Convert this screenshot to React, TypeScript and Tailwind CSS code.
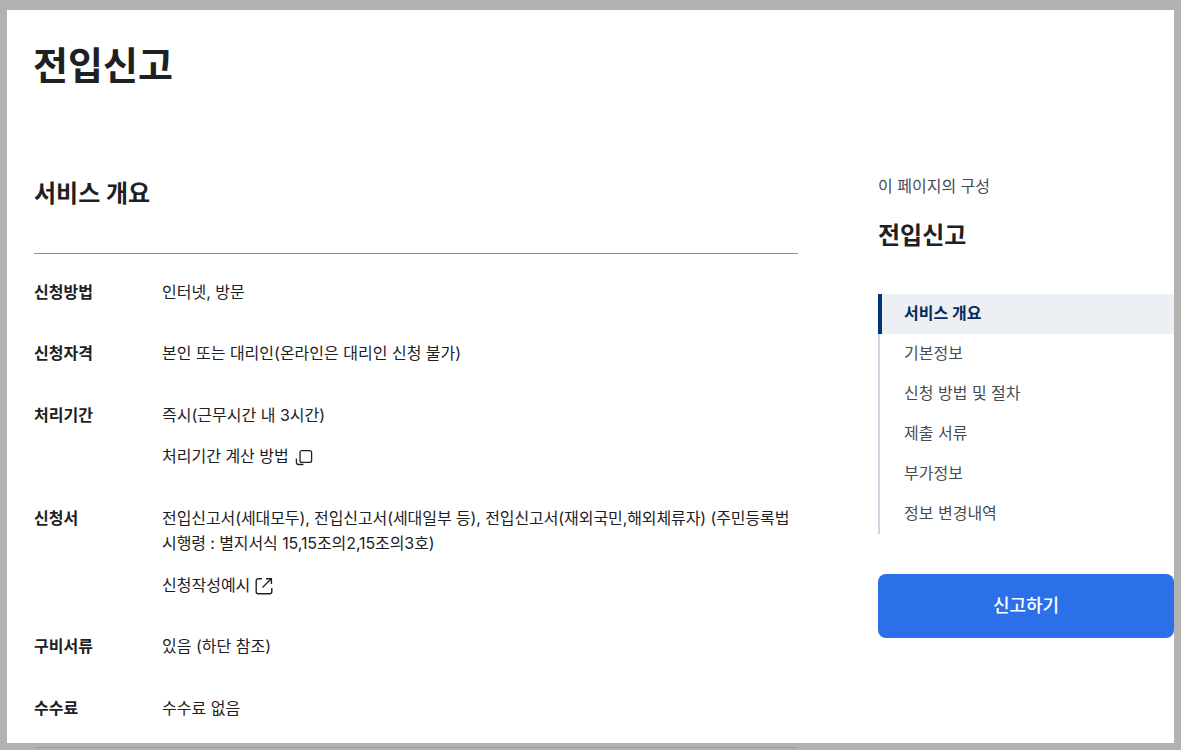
const font = "[font-family:Inter,'Noto_Sans_CJK_KR','Noto_Sans',sans-serif]";

function CopyIcon() {
  return (
    <svg width="18" height="18" viewBox="0 0 18 18" fill="none" stroke="#222" strokeWidth="1.3" className="shrink-0">
      <rect x="5" y="2.6" width="11.6" height="11.8" rx="2" />
      <path d="M1.4 10.5v3.8c0 1.4.8 2.2 2.1 2.2h5" />
    </svg>
  );
}

function LinkIcon() {
  return (
    <svg width="18" height="18" viewBox="0 0 18 18" fill="none" stroke="#222" strokeWidth="1.4" className="shrink-0">
      <path d="M7 1.7H3.2a2 2 0 0 0-2 2v11.1a2 2 0 0 0 2 2h11.6a2 2 0 0 0 2-2V11" />
      <path d="M11 1.7h5.4V7M16 2.1 7.5 10.5" />
    </svg>
  );
}

function Row({ label, className, children }: { label: string; className: string; children: React.ReactNode }) {
  return (
    <div className={`flex ${className}`}>
      <div className="w-[128px] shrink-0 text-[16px] leading-[24px] font-semibold text-[#1e2124]">{label}</div>
      <div className="flex-1 text-[16px] leading-[25px] text-[#1e2124]">{children}</div>
    </div>
  );
}

const navItems = ["기본정보", "신청 방법 및 절차", "제출 서류", "부가정보", "정보 변경내역"];

export default function App() {
  return (
    <div className={`h-[750px] overflow-hidden bg-[#b2b2b2] px-[7px] pt-[10px] ${font}`}>
      <div className="flex h-[733px] flex-col bg-white pl-[27px]">
        <h1 className="mt-[27px] -ml-px text-[38px] leading-[56px] font-bold text-[#1e2124]">전입신고</h1>
        <div className="mt-[81px] flex gap-[80px]">
          <main className="w-[764px] shrink-0">
            <h2 className="mt-[2px] text-[24px] leading-[36px] font-bold text-[#1e2124]">서비스 개요</h2>
            <div className="mt-[41px] h-px bg-[#8c8c8c]" />
            <Row label="신청방법" className="mt-[26px]">인터넷, 방문</Row>
            <Row label="신청자격" className="mt-[36px]">본인 또는 대리인(온라인은 대리인 신청 불가)</Row>
            <Row label="처리기간" className="mt-[37px]">
              <p>즉시(근무시간 내 3시간)</p>
              <p className="mt-[16px] flex items-center gap-[6px]">처리기간 계산 방법 <CopyIcon /></p>
            </Row>
            <Row label="신청서" className="mt-[37px]">
              <p className="tracking-[-0.09px]">전입신고서(세대모두), 전입신고서(세대일부 등), 전입신고서(재외국민,해외체류자) (주민등록법 시행령 : 별지서식 15,15조의2,15조의3호)</p>
              <p className="mt-[17px] flex items-center gap-[5px]">신청작성예시 <LinkIcon /></p>
            </Row>
            <Row label="구비서류" className="mt-[36px]">있음 (하단 참조)</Row>
            <Row label="수수료" className="mt-[37px]">수수료 없음</Row>
          </main>
          <aside className="flex-1">
            <p className="text-[16px] leading-[24px] text-[#464c53]">이 페이지의 구성</p>
            <p className="mt-[20px] text-[24px] leading-[36px] font-bold text-[#1e2124]">전입신고</p>
            <nav className="mt-[40px] border-l-2 border-[#cdd7e5]">
              <div className="-ml-[2px] flex h-[40px] items-center border-l-4 border-[#003675] bg-[#eceff4] pb-[2px] pl-[22px] text-[16px] font-bold text-[#052b5c]">서비스 개요</div>
              {navItems.map((item) => (
                <div key={item} className="flex h-[40px] items-center pb-[2px] pl-[24px] text-[16px] text-[#464c53]">{item}</div>
              ))}
            </nav>
            <button className="mt-[40px] h-[64px] w-full rounded-[8px] bg-[#2b6fe9] pb-[2px] text-[18px] font-medium text-white">신고하기</button>
          </aside>
        </div>
      </div>
      <div className="ml-[27px] mt-[4px] h-px w-[764px] bg-[#9c9c9c]" />
    </div>
  );
}
